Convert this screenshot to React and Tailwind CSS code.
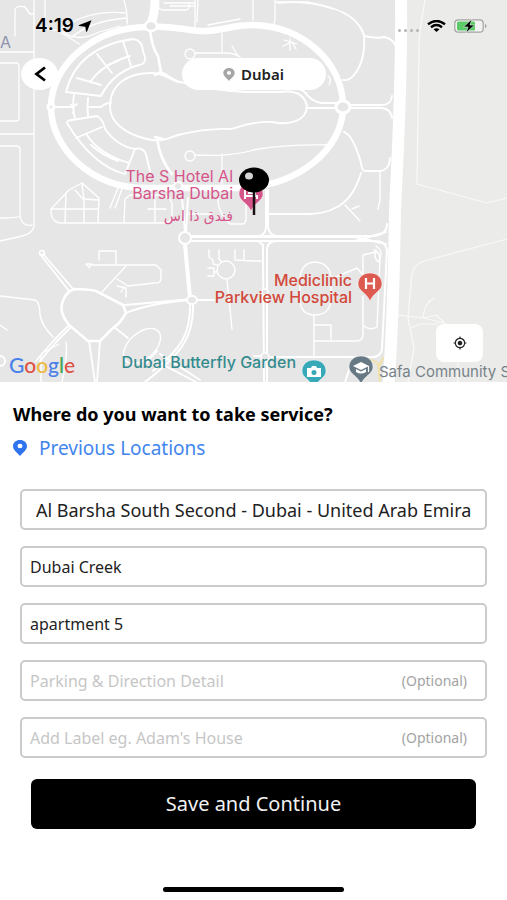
import React, { useState } from 'react';
import { MdMyLocation } from 'react-icons/md';

const fields = [
  { id: 'area', label: 'Area', value: 'Al Barsha South Second - Dubai - United Arab Emira', large: true },
  { id: 'building', label: 'Building', value: 'Dubai Creek' },
  { id: 'apartment', label: 'Apartment', value: 'apartment 5' },
  { id: 'parking', label: 'Parking', placeholder: 'Parking & Direction Detail', optional: true },
  { id: 'label', label: 'Label', placeholder: "Add Label eg. Adam's House", optional: true },
];

function MapRoads() {
  return (
    <svg
      className="absolute inset-0 w-full h-full"
      viewBox="0 0 507 382"
      preserveAspectRatio="xMidYMid slice"
      fill="none"
      stroke="#fff"
      strokeLinejoin="round"
      strokeLinecap="round"
      aria-hidden="true"
    >
      <rect width="507" height="382" fill="#e6e6e6" stroke="none" />
      <path d="M401 0H507V382H388L395 200Z" fill="#ebebe9" stroke="none" />

      {/* Open land on the east side */}
      <g strokeWidth="1.2" stroke="#f9f9f8">
        <path d="M425 0C422 20 419 28 419 50L417 184L487 203L507 198" />
        <path d="M507 239L424 261C414 265 412 270 411 282L408 318L414 348L408 382M397 315L424 318L443 323M423 318C424 307 428 301 434 298M423 318L436 315L446 324M411 328L420 324L438 324M458 360V382" />
      </g>

      {/* Minor streets */}
      <g strokeWidth="1.3">
        <path d="M15 36V10Q16 5 25 7L30 14H34M45 0V25Q46 30 56 30M34 0V225Q34 234 18 237L0 241M0 52H34M0 63H16Q19 63 19 67V118Q19 121 16 121H0M0 134H34M0 146H17Q20 146 20 150V216Q19 218 0 218M20 216Q22 227 32 225" />
        <path d="M58 30C75 19 95 10 125 13M72 37C85 26 102 20 126 18M61 33Q72 39 79 44M124 0Q128 12 127 24M63 32Q78 43 99 32L120 26" />
        <path d="M154 5L162 10H186Q190 9 189 3M164 3H194M195 0V27M170 6H194M198 0L197 22M208 25L240 19M253 0V20M222 33V52M195 53H227Q234 53 240 57M232 46L238 56" />
        <circle cx="190" cy="54" r="5" />
        <circle cx="190" cy="156" r="5" />
        <path d="M195 155Q230 157 254 150M222 154V184" />
        <path d="M275 0V21Q274 24 272 27M278 3Q310 0 332 9M275 2H307Q329 6 342 12" />
        <path d="M284 40L297 44M290 39V50M283 46L292 42L296 49M328 76Q332 79 329 85M298 89L307 93" />
      </g>
      <g strokeWidth="1.9">
        <path d="M66 92Q77 47 133 39Q142 40 143 51L145 57Q146 64 139 65Q113 72 101 96L66 92ZM77 78L101 85M91 81Q103 64 130 56M97 54L112 73M123 41L131 66M108 65L118 61" />
        <path d="M72 120L97 116Q103 119 105 129Q117 146 135 149L125 174Q93 166 67 123Q66 121 72 120M76 138L102 127M87 135Q99 154 129 163M91 145Q102 155 118 161M135 149Q143 147 146 154L150 171" />
        <path d="M74 95Q72 106 75 119M88 98Q87 108 88 116M53 107H73L77 104M89 107H101Q105 103 111 103M71 105Q75 109 73 113" />
        <path d="M110 107C110 83 129 73 151 73C167 73 168 81 185 83C205 88 225 91 247 92H280C300 89 306 99 307 107C306 120 291 126 272 122C250 121 241 127 231 129C211 128 194 131 178 135C165 139 162 143 143 138C125 133 110 122 110 107Z" />
        <path d="M300 86Q311 103 323 103H342M306 108H340M345 105H382Q391 105 392 96M347 108H382Q391 109 392 118M342 12Q359 20 364 35Q366 60 354 75Q349 81 343 80M364 36Q377 39 384 37Q393 39 395 45M344 132Q353 135 361 163Q362 171 365 171L381 171Q390 169 390 158M361 173Q353 200 335 208Q325 214 307 214H269" />
        <path d="M253 150Q285 144 331 145L325 154M380 172V200L378 209M345 205L360 221M352 209L359 206" strokeWidth="1.4" />
      </g>

      {/* Streets south of the ring */}
      <g strokeWidth="1.4">
        <path d="M59 223Q50 220 51 209L69 190L82 183L99 198L98 222M51 209H84L98 209M66 193L65 222M82 184L84 199V222M59 223H165Q172 223 172 214V203Q170 196 162 195H130L125 199L124 222M110 208L118 188M115 208L122 189M155 196V222M148 209H166M75 190L83 199L99 200" />
        <path d="M99 260V251H116V264M88 266L86 264L91 264L89 268M91 265H156L161 270V278Q161 284 154 283L128 286L117 279M127 265L102 292M117 286L126 288L126 297M124 287L121 292" />
        <circle cx="226" cy="270" r="9" />
        <path d="M209 250V257L213 260V264L217 265M219 250V259L222 262M208 268H214V276H208M214 272H217M227 280L232 329M235 250V260L254 261M244 250V260" />
        <path d="M189 214H211M218 190V202Q219 213 230 224H242Q246 224 246 218V198" />
        <path d="M0 296L35 300Q40 302 40 315Q42 326 53 337M0 325L7 330M66 342Q68 355 62 382M44 352L59 344M41 356V382" />
        <path d="M315 262Q330 263 331 278V299Q330 315 315 315Q300 315 300 299V278Q301 263 315 262M314 315V357M314 325H331V339M315 341H358Q363 340 363 334V296M331 279L357 268L363 275V255L376 252M376 246Q383 250 380 258L377 327Q370 331 364 326M374 250Q382 254 379 262Q373 259 376 250M254 261H262" />
        <ellipse cx="142" cy="346" rx="22" ry="13" transform="rotate(-42 142 346)" />
      </g>
      <g strokeWidth="2.6">
        <path d="M74 289Q88 289 96 291L123 305L126 313Q119 325 114 327L100 341H88L69 325Q58 311 63 301Q66 292 74 289Z" />
        <path d="M74 290L43 254M69 291L40 254M125 305L192 299M126 313Q150 303 192 300M69 325L54 340L36 361M71 327L56 342L40 361M89 341L95 382M100 341L97 382M114 327L128 338M147 362L157 351M154 360L196 382M160 354L200 380" strokeWidth="1.8" />
        <circle cx="42" cy="253" r="2.5" strokeWidth="1.5" />
        <path d="M150 30Q152 48 158 56L161 72L155 75M161 72L178 82M157 138Q160 160 172 174M155 137L163 139" />
        <path d="M182 198L185 232M188 198L186 232M186 245L191 298M184 245L189 298M193 303C194 335 184 352 145 382M190 303C191 334 180 350 153 371M198 300H214M192 236H375Q387 234 387 224M192 241H375Q387 241 387 253M192 237L355 237L386 244M355 241L386 232" strokeWidth="2" />
        <path d="M266 190V226Q266 234 260 236M268 190V226Q268 234 276 236M264 382L263 245L258 241M267 382V249Q267 242 276 241M271 357H374Q381 356 382 349L387 250M254 356H262M353 358L345 382" strokeWidth="2" />
        <circle cx="185" cy="238" r="6" fill="#e6e6e6" strokeWidth="2" />
        <ellipse cx="192" cy="300" rx="5" ry="4" fill="#e6e6e6" strokeWidth="2" />
        <circle cx="265" cy="357" r="4" fill="#e6e6e6" strokeWidth="1.5" />
        <circle cx="265" cy="292" r="3" fill="#e6e6e6" strokeWidth="1.5" />
        <circle cx="0" cy="361" r="5" fill="#e6e6e6" strokeWidth="2" />
      </g>

      {/* Main ring road and highway */}
      <path d="M151 27C93 26 51 66 51 107C51 148 91 188 145 188H235C298 188 343 149 343 107C343 62 303 26 252 25C232 25 218 32 200 31C183 30 168 25 151 27" strokeWidth="6.5" />
      <path d="M155 0Q155 13 151 24" strokeWidth="9" />
      <path d="M401 -4C402 80 398 150 395 210C394 280 392 340 388 390" strokeWidth="12" strokeLinecap="butt" />
      <ellipse cx="151" cy="26" rx="6" ry="5" fill="#e6e6e6" strokeWidth="2.5" />
      <ellipse cx="343" cy="107" rx="7" ry="6" fill="#e6e6e6" strokeWidth="3" />
      <circle cx="51" cy="107" r="3" fill="#e6e6e6" strokeWidth="3" />
      <circle cx="178" cy="186" r="4" fill="#e6e6e6" strokeWidth="2" />
      <path d="M372 360L380 365L383 358M378 364L380 382" stroke="#f0e2a8" strokeWidth="2" />
    </svg>
  );
}

function PlacePin({ className, color, children }) {
  return (
    <svg className={className} viewBox="0 0 26 30" fill="none" aria-hidden="true">
      <path d="M13 1C6 1 1 5.500 1 12C1 19 9 20 13 29C17 20 25 19 25 12C25 5.500 20 1 13 1Z" fill={color} stroke="#fff" strokeOpacity=".5" />
      {children}
    </svg>
  );
}

// Solid marker with a round hole, takes the text colour
function Marker({ className }) {
  return (
    <svg className={className} viewBox="0 0 14 16" fill="currentColor" aria-hidden="true">
      <path d="M7 0C3 0 0 2.700 0 6.300C0 10 4 12.500 7 16C10 12.500 14 10 14 6.300C14 2.700 11 0 7 0ZM7 3.700A2.500 2.300 0 1 1 7 8.300A2.500 2.300 0 1 1 7 3.700Z" fillRule="evenodd" />
    </svg>
  );
}

function MapPlaces() {
  return (
    <div className="absolute inset-0 overflow-hidden font-['Inter',sans-serif] text-base leading-[17px] whitespace-nowrap">
      <span className="absolute left-0 top-[34px] text-[#8f93ad]">A</span>

      <div className="absolute right-[274px] top-[168px] text-right text-[#d5548a]">
        <p>
          The S Hotel Al
          <br />
          Barsha Dubai
        </p>
        <p dir="rtl" lang="ar" className="mt-1 text-right font-['DejaVu_Sans',sans-serif] text-sm">
          فندق ذا اس
        </p>
      </div>
      <PlacePin className="absolute left-[238px] top-[182px] w-[26px] h-[30px]" color="#d5548a">
        <path d="M7 8V17M7 14H19V17M10 11H17V14" stroke="#fff" strokeWidth="2" />
      </PlacePin>
      {/* Selected spot */}
      <svg className="absolute left-[238px] top-[166px] w-8 h-[50px]" viewBox="0 0 32 50" aria-hidden="true">
        <path d="M16 24V49" stroke="#1a1014" strokeWidth="2.500" />
        <ellipse cx="16" cy="14" rx="15" ry="12.500" fill="#000" />
        <ellipse cx="11" cy="10" rx="4" ry="3.500" fill="#d4d4d4" />
      </svg>

      <p className="absolute right-[155px] top-[272px] text-right font-medium text-[#d2483a]">
        Mediclinic
        <br />
        Parkview Hospital
      </p>
      <PlacePin className="absolute left-[357px] top-[272px] w-[26px] h-[30px]" color="#dc5a50">
        <path d="M9 6V17M17 6V17M9 11.500H17" stroke="#fff" strokeWidth="2.200" />
      </PlacePin>

      <span className="absolute right-[211px] top-[354px] font-medium text-[#348b8e]">Dubai Butterfly Garden</span>
      <PlacePin className="absolute left-[301px] top-[359px] w-[26px] h-[30px]" color="#38a9b9">
        <path d="M6 9H10L11 7H15L16 9H20V18H6Z" fill="#fff" />
        <circle cx="13" cy="13.500" r="2.500" fill="#38a9b9" />
      </PlacePin>

      <PlacePin className="absolute left-[348px] top-[355px] w-[26px] h-[30px]" color="#667985">
        <path d="M5 11L13 7L21 11L13 15Z" fill="#fff" />
        <path d="M8 14V17Q13 20 18 17V14L13 16.500Z" fill="#fff" />
        <path d="M20.500 11V17" stroke="#fff" strokeWidth="1.200" />
      </PlacePin>
      <span className="absolute left-[379px] top-[363px] text-[15px] text-[#77838a]">Safa Community S</span>

      <span className="absolute left-[9px] top-[353px] font-['Lato',sans-serif] text-[21px] leading-6 font-medium" aria-label="Google">
        <span className="text-[#4a80ea]">G</span>
        <span className="text-[#df5145]">o</span>
        <span className="text-[#efb93e]">o</span>
        <span className="text-[#4a80ea]">g</span>
        <span className="text-[#43a45b]">l</span>
        <span className="text-[#df5145]">e</span>
      </span>
    </div>
  );
}

function StatusBar() {
  return (
    <div className="flex items-center justify-between h-[52px] pl-[35px] pr-5">
      <div className="flex items-center gap-1 font-['Inter',sans-serif] text-[19px] font-semibold text-black">
        <span>4:19</span>
        <svg className="w-[14px] h-3" viewBox="0 0 14 12" aria-hidden="true">
          <path d="M13.500 .3L9 11.500Q8.300 12.300 8 11.200L7.300 6.800L1.300 6Q0 5.600 1.200 4.900Z" fill="#000" />
        </svg>
      </div>
      <div className="flex items-center gap-2">
        <div className="flex gap-[3px] pt-2">
          {[0, 1, 2, 3].map((i) => (
            <span key={i} className="w-[3px] h-[3px] rounded-full bg-[#b5b5b5]" />
          ))}
        </div>
        <svg className="w-[19px] h-3" viewBox="0 0 19 12" fill="none" stroke="#000" strokeWidth="2.400" aria-hidden="true">
          <path d="M1 4.200Q9.500 -2.200 18 4.200" />
          <path d="M4 7.200Q9.500 3 15 7.200" />
          <path d="M6.500 9.300Q9.500 7.200 12.500 9.300L9.500 12Z" fill="#000" stroke="none" />
        </svg>
        <svg className="w-[33px] h-[14px]" viewBox="0 0 33 14" aria-hidden="true">
          <rect x=".8" y=".8" width="28.400" height="12.400" rx="3.500" fill="#f2f2f2" stroke="#a3a3a3" strokeWidth="1.200" />
          <rect x="3" y="2.500" width="18" height="9" rx="1.500" fill="#5bcb68" />
          <path d="M31 5V9Q32.500 8.500 32.500 7T31 5" fill="#a3a3a3" />
          <path d="M18 0L9.500 8H14L12 14L20.500 6H16Z" fill="#000" stroke="#e8f5e8" strokeWidth=".6" />
        </svg>
      </div>
    </div>
  );
}

function AddressField({ field }) {
  const [value, setValue] = useState(field.value || '');

  return (
    <div className={`flex items-center h-[41px] border-2 border-[#cbcbcb] rounded-[5px] ${field.large ? 'pl-3.5 pr-2' : 'pl-2 pr-[18px]'}`}>
      <label htmlFor={field.id} className="sr-only">{field.label}</label>
      <input
        id={field.id}
        type="text"
        value={value}
        placeholder={field.placeholder}
        onChange={(e) => setValue(e.target.value)}
        className={`flex-1 min-w-0 h-full bg-transparent outline-none text-[#222] placeholder:text-[#c6c6c6] ${field.large ? 'text-lg' : 'text-base'}`}
      />
      {field.optional && <span className="text-sm text-[#a3a3a3]">(Optional)</span>}
    </div>
  );
}

export default function App() {
  return (
    <div className="flex flex-col min-h-screen bg-white font-['Noto_Sans',sans-serif]">
      {/* Map */}
      <section className="relative flex flex-col h-[382px] overflow-hidden">
        <MapRoads />
        <MapPlaces />
        <div className="relative flex flex-col flex-1">
          <StatusBar />
          <div className="grid grid-cols-[1fr_auto_1fr] items-center px-[21px] pt-[6px]">
            <button aria-label="Back" className="flex items-center justify-center w-[37px] h-8 rounded-[50%] bg-white">
              <svg className="w-3 h-4" viewBox="0 0 12 16" fill="none" stroke="#000" strokeWidth="2.800" aria-hidden="true">
                <path d="M11 1.500L2.500 8L11 14.500" />
              </svg>
            </button>
            <button className="flex items-center justify-center gap-1.5 w-36 h-8 rounded-full bg-white text-[15px] font-semibold text-[#222]">
              <Marker className="w-3 h-[13px] text-[#a6a6a6]" />
              Dubai
            </button>
          </div>
          <button aria-label="Use my location" className="flex items-center justify-center self-end w-[47px] h-[38px] mt-auto mr-6 mb-5 rounded-lg bg-white">
            <MdMyLocation className="w-[14px] h-[14px] text-[#222]" />
          </button>
        </div>
      </section>

      {/* Address form */}
      <form className="flex flex-col flex-1" onSubmit={(e) => e.preventDefault()}>
        <div className="px-[13px] pt-5">
          <h1 className="text-lg leading-6 font-bold text-black">Where do you want to take service?</h1>
          <a href="#previous" className="flex items-center gap-3 mt-2.5 text-[19px] leading-6 text-[#4285ee]">
            <Marker className="w-[14px] h-4 text-[#2f73ee]" />
            Previous Locations
          </a>
        </div>
        <div className="flex flex-col gap-4 px-5 pt-[29px]">
          {fields.map((field) => (
            <AddressField key={field.id} field={field} />
          ))}
        </div>
        <div className="px-[31px] pt-[21px]">
          <button type="submit" className="w-full h-[50px] rounded-md bg-black text-xl text-[#f2f2f2]">
            Save and Continue
          </button>
        </div>
        <div className="self-center w-[181px] h-[5px] mt-auto mb-2 rounded-full bg-black" />
      </form>
    </div>
  );
}
